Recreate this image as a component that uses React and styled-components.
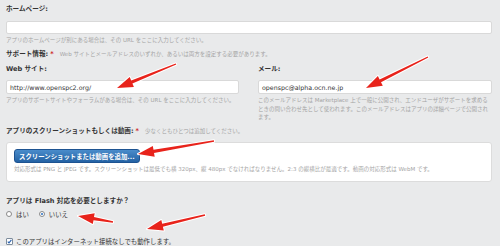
import React from "react"
import styled, { createGlobalStyle } from "styled-components"

const GlobalStyle = createGlobalStyle`
  html, body {
    margin: 0;
    padding: 0;
    background: #e9eaeb;
  }
  body {
    width: 500px;
    height: 246px;
    overflow: hidden;
    font-family: "DejaVu Sans", "Noto Sans CJK JP", sans-serif;
    color: #333;
  }
`

const Page = styled.div`
  position: relative;
  width: 500px;
  height: 246px;
  overflow: hidden;
`

const Form = styled.div`
  width: 486px;
  margin-left: 6px;
  display: flex;
  flex-direction: column;
`

const Label = styled.div`
  font-size: 6.6px;
  font-weight: bold;
  line-height: 10px;
  color: #333;
  margin-top: ${({ $top }) => $top || 0}px;
  white-space: nowrap;
`

const Required = styled.span`
  color: #cc2222;
  margin-left: 2px;
`

const Note = styled.span`
  font-size: 5.5px;
  font-weight: normal;
  color: #a4a4a4;
  margin-left: 6px;
`

const Input = styled.div`
  box-sizing: border-box;
  height: ${({ $h }) => $h || 13}px;
  margin-top: ${({ $top }) => $top || 0}px;
  background: #fff;
  border: 1px solid #d9d9d9;
  border-radius: 2px;
  padding: 0 3px;
  display: flex;
  align-items: center;
  font-size: 6.3px;
  color: #333;
`

const Help = styled.div`
  font-size: 5.5px;
  line-height: ${({ $lh }) => $lh || 8}px;
  color: #a4a4a4;
  margin-top: ${({ $top }) => $top || 0}px;
`

const Columns = styled.div`
  display: grid;
  grid-template-columns: 233px 234px;
  column-gap: 19px;
  margin-top: 5px;
`

const Column = styled.div`
  display: flex;
  flex-direction: column;
`

const MediaBox = styled.div`
  box-sizing: border-box;
  margin-top: 6px;
  height: 40px;
  background: #fff;
  border: 1px solid #dcdcdc;
  border-radius: 3px;
  padding: 6px 7px 0 7px;
  display: flex;
  flex-direction: column;
  align-items: flex-start;
`

const Button = styled.div`
  box-sizing: border-box;
  width: 126px;
  height: 14px;
  border-radius: 3px;
  background: linear-gradient(#4a8ccb, #2462a4);
  border: 1px solid #1d5391;
  color: #fff;
  font-size: 6.4px;
  font-weight: bold;
  display: flex;
  align-items: center;
  padding-left: 4px;
  white-space: nowrap;
`

const Row = styled.div`
  display: flex;
  align-items: center;
  height: 10px;
  margin-top: ${({ $top }) => $top || 0}px;
  font-size: 6.4px;
  color: #333;
  white-space: nowrap;
`

const Radio = styled.span`
  box-sizing: border-box;
  width: 6px;
  height: 6px;
  border-radius: 50%;
  border: 1px solid #8a8a8a;
  background: #fff;
  margin-right: 4px;
  margin-left: ${({ $left }) => $left || 0}px;
  display: flex;
  align-items: center;
  justify-content: center;
  &::after {
    content: "";
    display: ${({ $on }) => ($on ? "block" : "none")};
    width: 2.4px;
    height: 2.4px;
    border-radius: 50%;
    background: #2a6fc0;
  }
`

const Check = styled.span`
  box-sizing: border-box;
  width: 7px;
  height: 7px;
  border-radius: 1px;
  border: 1px solid #7d8c9c;
  background: #fff;
  margin-right: 3px;
  display: flex;
  align-items: center;
  justify-content: center;
  svg {
    display: block;
  }
`

const Overlay = styled.svg`
  position: absolute;
  left: 0;
  top: 0;
  pointer-events: none;
`

const ARROWS = [
  { from: [176, 64], to: [117, 88] },
  { from: [428, 57], to: [366, 88] },
  { from: [214, 141], to: [138, 154] },
  { from: [113, 222], to: [78, 216] },
  { from: [205, 215], to: [147, 229] }
]

function arrowPoints(from, to) {
  const dx = to[0] - from[0]
  const dy = to[1] - from[1]
  const len = Math.hypot(dx, dy)
  const ux = dx / len
  const uy = dy / len
  const nx = -uy
  const ny = ux
  const head = 16
  const bx = to[0] - ux * head
  const by = to[1] - uy * head
  const p = (x, y) => `${x.toFixed(1)},${y.toFixed(1)}`
  return [
    p(from[0] + nx * 0.7, from[1] + ny * 0.7),
    p(bx + nx * 1.6, by + ny * 1.6),
    p(bx + nx * 5.5, by + ny * 5.5),
    p(to[0], to[1]),
    p(bx - nx * 5.5, by - ny * 5.5),
    p(bx - nx * 1.6, by - ny * 1.6),
    p(from[0] - nx * 0.7, from[1] - ny * 0.7)
  ].join(" ")
}

function Arrows() {
  return (
    <Overlay width="500" height="246" viewBox="0 0 500 246">
      {ARROWS.map((a, i) => (
        <polygon
          key={i}
          points={arrowPoints(a.from, a.to)}
          fill="#e8231b"
          stroke="#fff"
          strokeWidth="2"
          strokeLinejoin="round"
          paintOrder="stroke"
        />
      ))}
    </Overlay>
  )
}

export default function App() {
  return (
    <Page>
      <GlobalStyle />
      <Form>
        <Label $top={4}>ホームページ:</Label>
        <Input $top={7} />
        <Help $top={2}>
          アプリのホームページが別にある場合は、その URL をここに入力してください。
        </Help>

        <Label $top={5}>
          サポート情報:<Required>*</Required>
          <Note>
            Web サイトとメールアドレスのいずれか、あるいは両方を設定する必要があります。
          </Note>
        </Label>

        <Columns>
          <Column>
            <Label>Web サイト:</Label>
            <Input $top={6} $h={14}>
              http://www.openspc2.org/
            </Input>
            <Help $top={2} $lh={8.7}>
              アプリのサポートサイトやフォーラムがある場合は、その URL をここに入力してください。
            </Help>
          </Column>
          <Column>
            <Label>メール:</Label>
            <Input $top={6} $h={14}>
              openspc@alpha.ocn.ne.jp
            </Input>
            <Help $top={2} $lh={8.7}>
              このメールアドレスは Marketplace
              上で一般に公開され、エンドユーザがサポートを求めるときの問い合わせ先として使われます。このメールアドレスはアプリの詳細ページで公開されます。
            </Help>
          </Column>
        </Columns>

        <Label $top={4}>
          アプリのスクリーンショットもしくは動画:<Required>*</Required>
          <Note>少なくともひとつは追加してください。</Note>
        </Label>

        <MediaBox>
          <Button>スクリーンショットまたは動画を追加...</Button>
          <Help $top={2}>
            対応形式は PNG と JPEG です。スクリーンショットは最低でも横 320px、縦 480px
            でなければなりません。2:3 の縦横比が最適です。動画の対応形式は WebM です。
          </Help>
        </MediaBox>

        <Label $top={14}>アプリは Flash 対応を必要としますか？</Label>
        <Row $top={3}>
          <Radio />
          はい
          <Radio $on $left={10} />
          いいえ
        </Row>
        <Row $top={17}>
          <Check>
            <svg width="5" height="5" viewBox="0 0 10 10">
              <path d="M1.5 5.2 L4 7.8 L8.8 1.8" fill="none" stroke="#2a62b0" strokeWidth="2.2" />
            </svg>
          </Check>
          このアプリはインターネット接続なしでも動作します。
        </Row>
      </Form>
      <Arrows />
    </Page>
  )
}
